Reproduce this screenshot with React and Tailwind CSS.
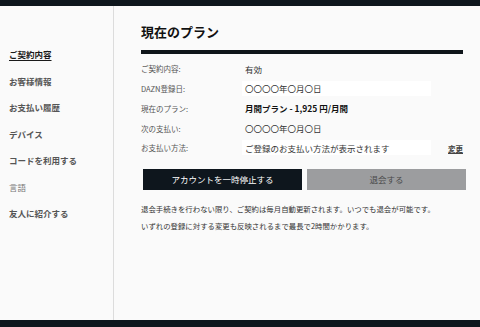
import React from 'react'

const menu = [
  { label: 'ご契約内容', active: true },
  { label: 'お客様情報' },
  { label: 'お支払い履歴' },
  { label: 'デバイス' },
  { label: 'コードを利用する' },
  { label: '言語', light: true },
  { label: '友人に紹介する' },
]

const rows = [
  { label: 'ご契約内容:', value: '有効' },
  { label: 'DAZN登録日:', value: '〇〇〇〇年〇月〇日', box: true },
  { label: '現在のプラン:', value: '月間プラン - 1,925 円/月間', bold: true },
  { label: '次の支払い:', value: '〇〇〇〇年〇月〇日' },
  { label: 'お支払い方法:', value: 'ご登録のお支払い方法が表示されます', box: true, edit: true },
]

const App = () => {
  return (
    <div
      className="h-[327px] w-[480px] flex flex-col bg-[#fafafa] text-[#222]"
      style={{ fontFamily: '"Noto Sans CJK JP", "Noto Sans", sans-serif' }}
    >
      <div className="h-[6px] bg-[#0e161d]" />

      <div className="flex flex-1">
        {/* sidebar */}
        <div className="w-[114px] border-r border-[#dcdcdc] pt-[35px] pl-[9px] flex flex-col">
          {menu.map((m) => (
            <div key={m.label} className="h-[26.6px] flex items-center">
              <span
                className={
                  m.active
                    ? 'text-[8.5px] font-bold text-[#1a1a1a] underline underline-offset-2'
                    : m.light
                    ? 'text-[8.5px] text-[#777]'
                    : 'text-[8.5px] font-bold text-[#555]'
                }
              >
                {m.label}
              </span>
            </div>
          ))}
        </div>

        {/* main */}
        <div className="flex-1 pl-[27px] pr-[17px] pt-[18px]">
          <h1 className="text-[13px] leading-[16px] font-bold text-[#111]">現在のプラン</h1>
          <div className="mt-[10px] h-[4px] bg-[#0f151a]" />

          <div className="mt-[5px]">
            {rows.map((r) => (
              <div key={r.label} className="h-[19.75px] flex items-center">
                <div className="w-[101px] text-[7.5px] text-[#555]">{r.label}</div>
                <div
                  className={`h-[15px] w-[189px] flex items-center px-[3px] text-[8.5px] ${
                    r.box ? 'bg-white' : ''
                  } ${r.bold ? 'font-bold text-[#111]' : 'text-[#333]'}`}
                >
                  {r.value}
                </div>
                {r.edit && (
                  <div className="ml-auto text-[7.5px] font-bold text-[#444] underline mt-[2px]">変更</div>
                )}
              </div>
            ))}
          </div>

          <div className="mt-[11px] ml-[2px] -mr-[3px] flex gap-[5px]">
            <button className="flex-1 h-[21px] bg-[#0e161d] text-white text-[8.5px]">
              アカウントを一時停止する
            </button>
            <button className="flex-1 h-[21px] bg-[#9c9d9f] text-[#4a4a4a] text-[8.5px]">
              退会する
            </button>
          </div>

          <div className="mt-[10px] text-[7.4px] leading-[17px] text-[#333]">
            <p>退会手続きを行わない限り、ご契約は毎月自動更新されます。いつでも退会が可能です。</p>
            <p>いずれの登録に対する変更も反映されるまで最長で2時間かかります。</p>
          </div>
        </div>
      </div>

      <div className="h-[7px] bg-[#0e161d]" />
    </div>
  )
}

export default App
